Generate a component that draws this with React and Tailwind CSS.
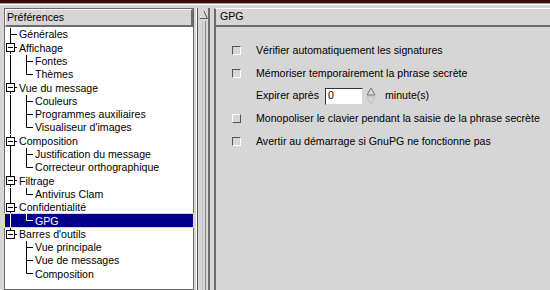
import React from 'react'

const TREE = [
  { label: 'Générales', level: 0 },
  { label: 'Affichage', level: 0, open: true },
  { label: 'Fontes', level: 1 },
  { label: 'Thèmes', level: 1, last: true },
  { label: 'Vue du message', level: 0, open: true },
  { label: 'Couleurs', level: 1 },
  { label: 'Programmes auxiliaires', level: 1 },
  { label: "Visualiseur d'images", level: 1, last: true },
  { label: 'Composition', level: 0, open: true },
  { label: 'Justification du message', level: 1 },
  { label: 'Correcteur orthographique', level: 1, last: true },
  { label: 'Filtrage', level: 0, open: true },
  { label: 'Antivirus Clam', level: 1, last: true },
  { label: 'Confidentialité', level: 0, open: true },
  { label: 'GPG', level: 1, last: true, selected: true },
  { label: "Barres d'outils", level: 0, open: true, lastRoot: true },
  { label: 'Vue principale', level: 1, underLast: true },
  { label: 'Vue de messages', level: 1, underLast: true },
  { label: 'Composition', level: 1, last: true, underLast: true },
]

function TreeLines({ item }) {
  const h = 13
  const mid = 6.5
  const stroke = item.selected ? '#ffffff' : '#000000'
  if (item.level === 0) {
    return (
      <svg width="13" height={h} className="shrink-0">
        <line x1="5.5" y1="0" x2="5.5" y2={item.lastRoot ? mid : h} stroke="#000" />
        <line x1="5.5" y1={mid} x2="12" y2={mid} stroke="#000" />
        {item.open && (
          <g>
            <rect x="1.5" y="2.5" width="8" height="8" fill="#fff" stroke="#000" />
            <line x1="3" y1={mid} x2="8" y2={mid} stroke="#000" />
          </g>
        )}
      </svg>
    )
  }
  return (
    <svg width="29" height={h} className="shrink-0">
      {!item.underLast && <line x1="5.5" y1="0" x2="5.5" y2={h} stroke={stroke} />}
      <line x1="21.5" y1="0" x2="21.5" y2={item.last ? mid : h} stroke={stroke} />
      <line x1="21.5" y1={mid} x2="28" y2={mid} stroke={stroke} />
    </svg>
  )
}

function Check({ raised }) {
  return (
    <div
      className={`w-[9px] h-[9px] bg-[#d6d6d6] border ${
        raised
          ? 'border-t-white border-l-white border-b-[#555] border-r-[#555]'
          : 'border-t-[#555] border-l-[#555] border-b-white border-r-white'
      }`}
    />
  )
}

function OptionRow({ children, raised }) {
  return (
    <div className="flex items-center h-[23px]">
      <div className="w-[24px] flex justify-start">
        <Check raised={raised} />
      </div>
      <span>{children}</span>
    </div>
  )
}

export default function App() {
  return (
    <div
      className="w-[550px] h-[290px] bg-[#d6d6d6] flex flex-col overflow-hidden text-[10.6px] text-black"
      style={{ fontFamily: '"Liberation Sans", Arial, sans-serif' }}
    >
      {/* window top edge */}
      <div className="h-[3px] bg-[#3c0a0a] shrink-0" />
      <div className="h-[1px] bg-[#9a9a9a] shrink-0" />
      <div className="h-[1px] bg-white shrink-0" />

      <div className="flex flex-1 pt-[3px] pl-[4px] min-h-0">
        {/* left tree */}
        <div className="w-[190px] shrink-0 flex flex-col border border-[#6b6b6b] bg-white">
          <div className="h-[18px] shrink-0 bg-[#d6d6d6] border-t border-l border-white border-b-2 border-r-2 border-b-[#6b6b6b] border-r-[#6b6b6b] flex items-center pl-[1px]">
            Préférences
          </div>
          <div className="flex flex-col pt-[1px]">
            {TREE.map((item, i) => (
              <div
                key={i}
                className={`flex items-center h-[13.3px] ${
                  item.selected ? 'bg-[#00008b] text-white outline outline-1 outline-[#e8e070]' : ''
                }`}
              >
                <div className="flex">
                  <TreeLines item={item} />
                </div>
                <span className="pl-[1px] leading-none">{item.label}</span>
              </div>
            ))}
          </div>
        </div>

        {/* scrollbar */}
        <div className="w-[20px] shrink-0 flex pl-[2px]">
          <div className="w-[14px] flex flex-col border-l border-[#ffffff] border-r-2 border-r-[#6b6b6b] bg-[#d6d6d6]">
            <div className="flex-1 flex flex-col border-l border-[#555]">
              <div className="h-[13px] flex justify-center items-center">
                <svg width="9" height="9">
                  <polygon points="4.5,0.5 8.5,8.5 0.5,8.5" fill="#d6d6d6" stroke="#555" />
                  <line x1="4.5" y1="0.5" x2="0.5" y2="8.5" stroke="#fff" />
                </svg>
              </div>
              <div className="flex-1 border-l border-[#c0c0c0] ml-[4px] border-r border-r-[#888] mr-[2px]" />
            </div>
          </div>
        </div>

        {/* right page */}
        <div className="flex-1 flex flex-col border-l-2 border-[#6b6b6b] border-t border-t-white">
          <div className="h-[18px] shrink-0 flex items-center pl-[4px] border-b-2 border-[#6b6b6b]">
            GPG
          </div>
          <div className="flex flex-col pl-[16px] pt-[12px]">
            <OptionRow>Vérifier automatiquement les signatures</OptionRow>
            <OptionRow>Mémoriser temporairement la phrase secrète</OptionRow>
            <div className="flex items-center h-[22px] pl-[24px]">
              <span>Expirer après</span>
              <div className="ml-[6px] w-[38px] h-[17px] bg-white border border-t-[#333] border-l-[#333] border-b-[#d6d6d6] border-r-[#d6d6d6] flex items-center pl-[2px]">
                0
              </div>
              <svg width="10" height="18" className="ml-[3px]">
                <polygon points="5,1 9,8 1,8" fill="#d6d6d6" stroke="#777" />
                <polygon points="5,17 9,10 1,10" fill="#d6d6d6" stroke="#bbb" />
              </svg>
              <span className="ml-[9px]">minute(s)</span>
            </div>
            <OptionRow raised>Monopoliser le clavier pendant la saisie de la phrase secrète</OptionRow>
            <OptionRow>Avertir au démarrage si GnuPG ne fonctionne pas</OptionRow>
          </div>
        </div>
      </div>
    </div>
  )
}
